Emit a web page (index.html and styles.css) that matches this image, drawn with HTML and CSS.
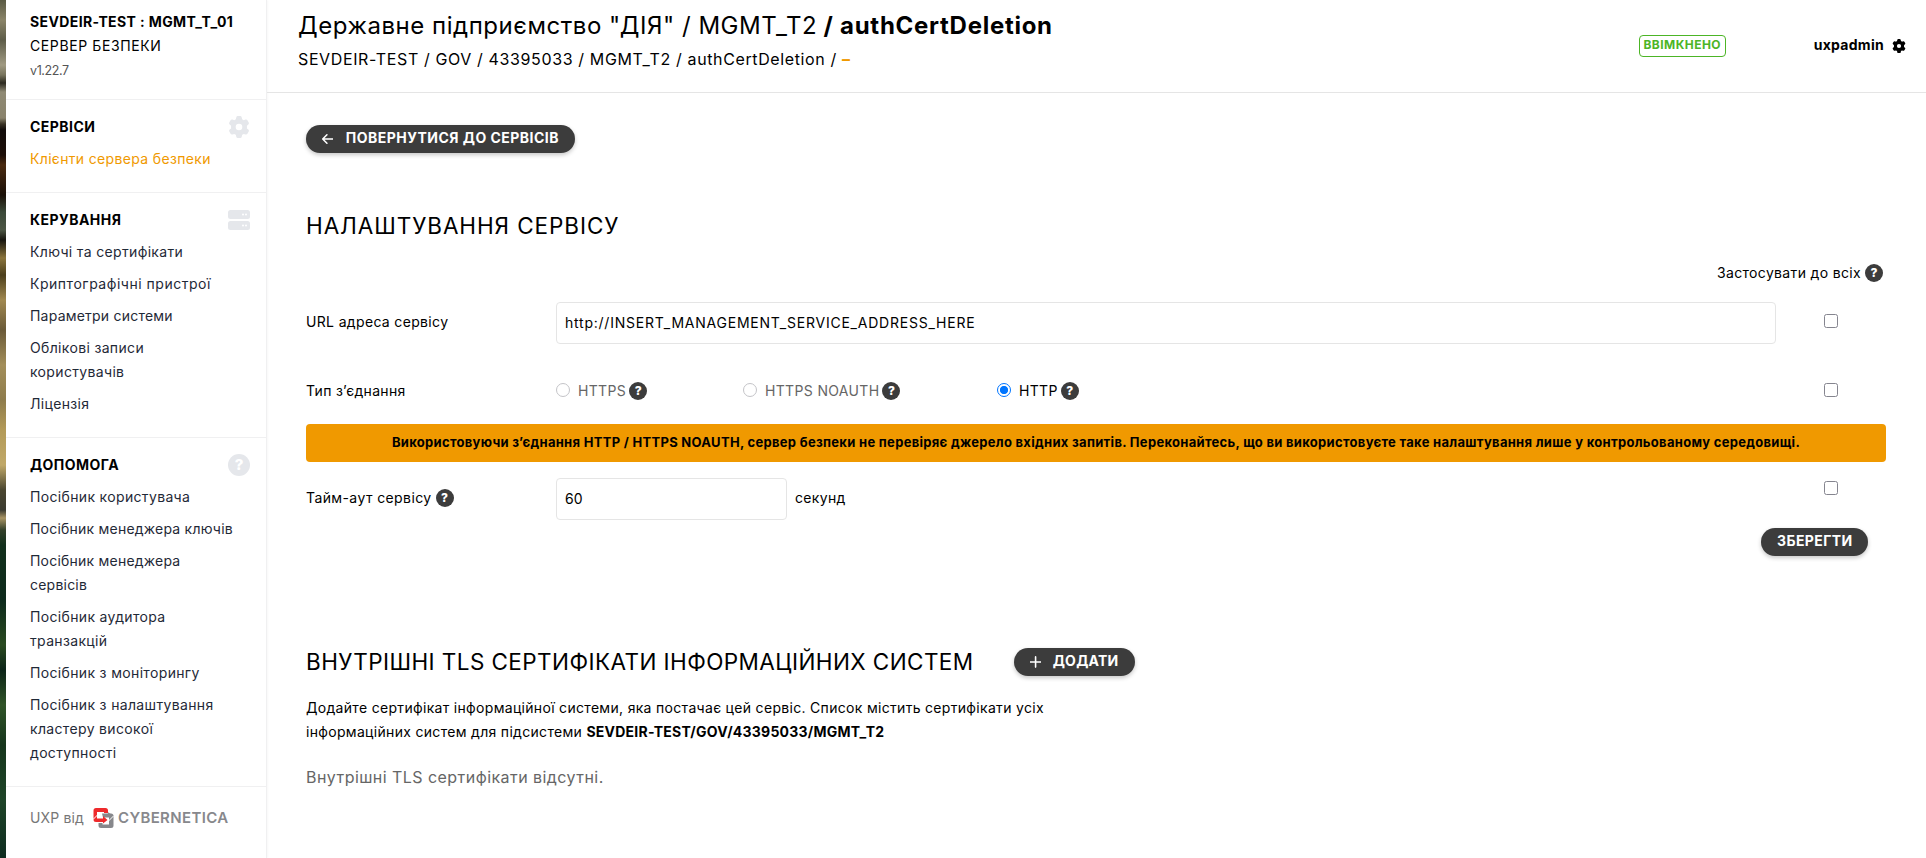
FILE: index.html
```html
<!DOCTYPE html>
<html lang="uk">
<head>
<meta charset="utf-8">
<title>authCertDeletion</title>
<link rel="stylesheet" href="styles.css">
</head>
<body>
<svg class="sprite" width="0" height="0" aria-hidden="true">
  <symbol id="gear" viewBox="0 0 24 24">
    <path fill-rule="evenodd" d="M9 1.500Q9.300 0 10.700 0h2.600q1.400 0 1.700 1.500l.4 2q.9.400 1.700 1l2-.7q1.400-.4 2.100.8l1.400 2.400q.7 1.200-.4 2.200l-1.600 1.300q.15 1.500 0 3l1.600 1.300q1.100 1 .4 2.200l-1.400 2.400q-.7 1.200-2.100.8l-2-.7q-.8.600-1.700 1l-.4 2Q14.700 24 13.300 24h-2.600Q9.300 24 9 22.500l-.4-2q-.9-.4-1.700-1l-2 .7q-1.400.4-2.100-.8L1.400 17q-.7-1.200.4-2.200l1.600-1.300q-.15-1.500 0-3L1.800 9.200Q.7 8.200 1.400 7l1.400-2.400q.7-1.200 2.100-.8l2 .7q.8-.6 1.700-1zM12 8.400a3.600 3.600 0 1 0 0 7.200a3.600 3.600 0 1 0 0-7.200z"/>
  </symbol>
</svg>
<div class="app">
  <div class="backdrop"></div>
  <aside class="sidebar">
    <div class="brand">
      <strong class="brand-name">SEVDEIR-TEST : MGMT_T_01</strong>
      <span class="brand-role">СЕРВЕР БЕЗПЕКИ</span>
      <span class="brand-version">v1.22.7</span>
    </div>
    <nav class="group">
      <div class="group-head"><h3>СЕРВІСИ</h3>
        <svg class="group-icon" width="22" height="22"><use href="#gear"/></svg></div>
      <a class="active">Клієнти сервера безпеки</a>
    </nav>
    <nav class="group">
      <div class="group-head"><h3>КЕРУВАННЯ</h3>
        <svg class="group-icon" width="22" height="20" viewBox="0 0 22 20"><rect width="22" height="9" rx="2.500"/><rect y="11" width="22" height="9" rx="2.500"/><g fill="#fff"><circle cx="15" cy="4.500" r="1"/><circle cx="18" cy="4.500" r="1"/><circle cx="15" cy="15.500" r="1"/><circle cx="18" cy="15.500" r="1"/></g></svg></div>
      <a>Ключі та сертифікати</a>
      <a class="loose">Криптографічні пристрої</a>
      <a class="tight">Параметри системи</a>
      <a>Облікові записи<br>користувачів</a>
      <a>Ліцензія</a>
    </nav>
    <nav class="group">
      <div class="group-head"><h3>ДОПОМОГА</h3>
        <span class="help help-lg">?</span></div>
      <a>Посібник користувача</a>
      <a class="tight">Посібник менеджера ключів</a>
      <a class="tight">Посібник менеджера<br>сервісів</a>
      <a>Посібник аудитора<br>транзакцій</a>
      <a>Посібник з моніторингу</a>
      <a>Посібник з налаштування<br>кластеру високої<br>доступності</a>
    </nav>
    <footer class="vendor">
      <span>UXP від</span>
      <svg class="vendor-mark" width="21" height="21" viewBox="0 0 21 21">
        <path fill="#87888c" d="M9 5.500h9q2.500 0 2.500 2.500v9.500q0 2.500-2.500 2.500H8q-2.500 0-2.500-2.500V15h4v1.500h6.500V9.500H10z"/>
        <path fill="#87888c" d="M14 3.500l6.500 4.500-2.500 3.500z"/>
        <path fill="#ee2a2c" d="M3 0h9.500Q15 0 15 2.500V5h-4V4H4v6.500h6V8l4.500 4-4.500 3.500V14H3Q.5 14 .5 11.500v-9Q.5 0 3 0z"/>
        <path fill="none" stroke="#fff" stroke-width="1" d="M0 11.500l4.500-4.500M15.500 13l5-5"/>
      </svg>
      <strong class="vendor-name">CYBERNETICA</strong>
    </footer>
  </aside>
  <main class="main">
    <header class="topbar">
      <div class="titles">
        <h1>Державне підприємство "ДІЯ" / MGMT_T2 <b>/ authCertDeletion</b></h1>
        <p class="crumbs">SEVDEIR-TEST / GOV / 43395033 / MGMT_T2 / authCertDeletion / <b>–</b></p>
      </div>
      <span class="badge">ВВІМКНЕНО</span>
      <div class="user"><span>uxpadmin</span><svg width="14" height="14"><use href="#gear"/></svg></div>
    </header>
    <div class="content">
      <a class="btn btn-back"><svg width="12" height="12" viewBox="0 0 12 12"><path d="M12 6H1M5.500 1.200L.8 6l4.700 4.800"/></svg>ПОВЕРНУТИСЯ ДО СЕРВІСІВ</a>
      <h2 class="section-title wide">НАЛАШТУВАННЯ СЕРВІСУ</h2>
      <div class="apply-all"><span>Застосувати до всіх</span><span class="help">?</span></div>
      <div class="row row-url">
        <label>URL адреса сервісу</label>
        <input class="field field-url" type="text" value="http://INSERT_MANAGEMENT_SERVICE_ADDRESS_HERE">
        <input class="check" type="checkbox">
      </div>
      <div class="row row-type">
        <label>Тип з’єднання</label>
        <div class="radios">
          <span class="option off https"><i class="radio"></i>HTTPS<span class="help">?</span></span>
          <span class="option off noauth"><i class="radio"></i>HTTPS NOAUTH<span class="help">?</span></span>
          <span class="option"><i class="radio on"></i>HTTP<span class="help">?</span></span>
        </div>
        <input class="check" type="checkbox">
      </div>
      <div class="alert">Використовуючи з’єднання HTTP / HTTPS NOAUTH, сервер безпеки не перевіряє джерело вхідних запитів. Переконайтесь, що ви використовуєте таке налаштування лише у контрольованому середовищі.</div>
      <div class="row row-timeout">
        <label>Тайм-аут сервісу<span class="help">?</span></label>
        <input class="field field-timeout" type="text" value="60">
        <span class="unit">секунд</span>
        <input class="check" type="checkbox">
      </div>
      <div class="actions"><a class="btn btn-save">ЗБЕРЕГТИ</a></div>
      <div class="certs-head">
        <h2 class="section-title">ВНУТРІШНІ TLS СЕРТИФІКАТИ ІНФОРМАЦІЙНИХ СИСТЕМ</h2>
        <a class="btn btn-add"><svg width="12" height="12" viewBox="0 0 12 12"><path d="M6 .5v11M.5 6h11"/></svg>ДОДАТИ</a>
      </div>
      <p class="note">Додайте сертифікат інформаційної системи, яка постачає цей сервіс. Список містить сертифікати усіх<br>інформаційних систем для підсистеми <b>SEVDEIR-TEST/GOV/43395033/MGMT_T2</b></p>
      <p class="empty">Внутрішні TLS сертифікати відсутні.</p>
    </div>
  </main>
</div>
</body>
</html>
```
FILE: styles.css
```css
* { box-sizing: border-box; }
body {
  margin: 0;
  background: #fff;
  color: #000;
  font: 400 14px/24px Inter, "Open Sans", sans-serif;
  letter-spacing: .34px;
  white-space: nowrap;
}
h1, h2, h3, p { margin: 0; }
.sprite { position: absolute; }
.app { display: flex; height: 858px; overflow: hidden; }

.backdrop {
  width: 6px;
  flex: none;
  background: linear-gradient(#5a5a44 0, #8a8468 20px, #5d5c48 40px, #a09a82 65px, #77735c 75px, #2c2a20 83px, #8f8a74 92px, #8a836c 118px, #3a3426 124px, #120c0a 130px, #1c0e08 155px, #4a2a10 165px, #1a1008 195px, #3a4838 212px, #4c5644 230px, #17150e 240px, #8a743c 258px, #4c3f1c 275px, #a08850 300px, #6a5a38 330px, #a38e5a 365px, #8e7c4c 400px, #b39a58 430px, #c0a868 465px, #4a4630 490px, #3a3a30 510px, #a89464 518px, #33402a 530px, #12301c 545px, #0d2a1c 600px, #2a4a20 645px, #0c2418 670px, #305428 705px, #16351c 745px, #1e4428 800px, #0e2c20 858px);
}

.sidebar { width: 261px; flex: none; border-right: 1px solid #f0f0f1; box-shadow: 1px 0 2px rgba(0, 0, 0, .03); }
.brand { display: flex; flex-direction: column; height: 99px; padding: 10px 24px 0; }
.brand-name { letter-spacing: .38px; }
.brand-role { letter-spacing: .6px; }
.brand-version { font-size: 12.5px; letter-spacing: -.4px; color: #555; padding-top: 1px; }
.group { display: flex; flex-direction: column; gap: 8px; padding: 15px 16px 21px 24px; border-top: 1px solid #f0f0f1; color: #1f2937; }
.group-head { display: flex; justify-content: space-between; align-items: center; height: 24px; }
.group-head h3 { font-size: 14px; letter-spacing: .46px; color: #000; }
.group-icon { fill: #e5e7eb; }
.active { color: #f09900; }
.loose { letter-spacing: .52px; }
.tight { letter-spacing: .22px; }
.vendor { display: flex; align-items: center; padding: 19px 24px; border-top: 1px solid #f0f0f1; color: #777; letter-spacing: .15px; }
.vendor-mark { margin: 0 4px 0 9px; }
.vendor-name { font-size: 15px; font-weight: 600; letter-spacing: .35px; color: #87888c; }

.help {
  display: inline-flex; align-items: center; justify-content: center;
  width: 18px; height: 18px; border-radius: 50%;
  background: #3c3c3c; color: #fff;
  font-size: 12px; font-weight: 800; line-height: 18px; letter-spacing: 0;
}
.help-lg { width: 22px; height: 22px; background: #e5e7eb; font-size: 15px; line-height: 22px; }

.main { flex: 1; min-width: 0; }
.topbar { display: flex; align-items: flex-start; height: 93px; padding: 10px 20px 0 31px; border-bottom: 1px solid #e5e5e5; }
.titles { flex: 1; }
.topbar h1 { font-size: 24px; font-weight: 400; line-height: 31px; letter-spacing: .54px; }
.topbar h1 b { letter-spacing: .72px; margin-left: -1px; }
.crumbs { margin-top: 6px; font-size: 16px; letter-spacing: .62px; }
.crumbs b { color: #f09900; letter-spacing: 0; }
.badge { width: 87px; height: 22px; margin: 25px 88px 0 0; border: 1px solid #4cb526; border-radius: 4px; color: #4cb526; font-size: 12px; font-weight: 700; line-height: 18px; letter-spacing: .45px; text-align: center; }
.user { display: flex; align-items: center; gap: 8px; margin-top: 23px; font-weight: 700; letter-spacing: .28px; }
.user svg { margin-top: 2px; }

.content { padding: 32px 40px 0 39px; }
.btn {
  display: inline-flex; align-items: center; height: 28px; padding: 0 16px 2px; border-radius: 14px;
  background: #3c3c3c; color: #fff; font-weight: 700; letter-spacing: .48px;
  box-shadow: 0 2px 4px rgba(0, 0, 0, .22);
}
.btn svg { margin: 1px 12px 0 0; fill: none; stroke: #fff; stroke-width: 1.7; stroke-linecap: round; stroke-linejoin: round; }
.btn-back { display: flex; width: 269px; }
.btn-back svg { margin-right: 13px; }
.section-title { font-size: 22.5px; font-weight: 400; line-height: 30px; letter-spacing: .42px; }
.wide { margin-top: 58px; letter-spacing: .92px; }
.apply-all { display: flex; align-items: center; justify-content: flex-end; gap: 4px; margin-top: 20px; padding-right: 3px; }
.row { display: flex; align-items: center; padding-right: 48px; }
.row label { display: flex; align-items: center; gap: 4px; width: 250px; }
.field { height: 42px; padding: 0 8px 2px; border: 1px solid #e5e5e5; border-radius: 4px; background: #fff; color: #000; font: inherit; }
.field-url { width: 1220px; letter-spacing: .77px; }
.field-timeout { width: 231px; }
.unit { margin: 0 0 2px 8px; }
.check { appearance: none; width: 14px; height: 14px; margin: 0 0 0 auto; border: 1px solid #85858f; border-radius: 2.5px; background: #fff; }
.row-url { margin-top: 17px; }
.row-url label, .row-timeout label { margin-bottom: 2px; }
.row-url .check { margin-bottom: 4px; }
.row-type { margin-top: 35px; }
.row-type .check { margin-bottom: 2px; }
.radios { display: flex; }
.option { display: flex; align-items: center; }
.option .help { margin-left: 3px; }
.off { color: #666; }
.https { width: 187px; }
.noauth { width: 254px; }
.radio { width: 14px; height: 14px; margin: 0 8px 2px 0; border: 1px solid #c4c4c8; border-radius: 50%; }
.radio.on { border: 1.5px solid #0075ff; background: radial-gradient(circle, #0075ff 3.7px, #fff 4.5px); }
.alert { height: 38px; margin-top: 21px; border-radius: 4px; background: #f09900; font-size: 13px; font-weight: 700; line-height: 37px; letter-spacing: .3px; text-align: center; }
.row-timeout { margin-top: 16px; }
.row-timeout label { letter-spacing: .4px; }
.row-timeout .check { align-self: flex-start; margin-top: 3px; }
.actions { display: flex; justify-content: flex-end; margin-top: 8px; padding-right: 18px; }
.btn-save { width: 107px; letter-spacing: .42px; }
.certs-head { display: flex; align-items: center; gap: 40px; height: 30px; margin-top: 91px; }
.btn-add { width: 121px; letter-spacing: .25px; }
.note { margin-top: 19px; letter-spacing: .31px; }
.note b { letter-spacing: .24px; }
.empty { margin-top: 21px; font-size: 16px; letter-spacing: .45px; color: #666; }
```
